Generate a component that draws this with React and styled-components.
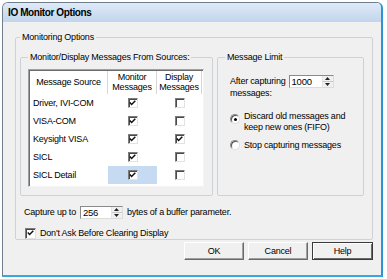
import React from 'react'
import styled, { createGlobalStyle } from 'styled-components'

const GlobalStyle = createGlobalStyle`
  *, *::before, *::after { box-sizing: border-box; }
  body {
    margin: 0;
    background: #fff;
    font-family: "Liberation Sans", Arial, sans-serif;
    font-size: 9px;
    letter-spacing: -0.2px;
    color: #000;
  }
`

const Window = styled.div`
  margin: 2px 0 0 2px;
  width: 381px;
  height: 275px;
  border: 1px solid #6f7f8f;
  border-right: 2px solid #2a94d6;
  border-bottom: 2px solid #35a8e0;
  border-radius: 6px 6px 0 0;
  display: flex;
  flex-direction: column;
  overflow: hidden;
`

const TitleBar = styled.div`
  height: 19px;
  flex: none;
  display: flex;
  align-items: center;
  padding-left: 5px;
  background: linear-gradient(#dfeaf7, #c1d5ec);
  font-size: 10px;
  font-weight: bold;
  letter-spacing: -0.4px;
`

const Content = styled.div`
  flex: 1;
  background: #f0f0f0;
  padding: 10px 8px 0 12px;
  display: flex;
  flex-direction: column;
`

const Group = styled.fieldset`
  margin: 0;
  min-width: 0;
  border: 1px solid #cdd2d7;
  border-radius: 2px;
  padding: ${p => p.$pad};
  width: ${p => p.$w || 'auto'};
  display: flex;
  flex-direction: column;
`

const Legend = styled.legend`
  padding: 0 2px;
  margin-left: ${p => p.$lx || 0}px;
  line-height: 11px;
  font-size: 9px;
`

const GroupRow = styled.div`
  display: flex;
  gap: 4px;
  height: 144px;
`

const Table = styled.div`
  height: 118px;
  background: #fff;
  border: 1px solid;
  border-color: #a0a0a0 #f4f4f4 #f4f4f4 #a0a0a0;
  box-shadow: inset 1px 1px #6c6c6c;
  padding: 1px 0 0 1px;
  display: grid;
  grid-template-columns: 78px 49px 45px;
  grid-template-rows: 23px repeat(5, 18px);
  align-content: start;
`

const HeadCell = styled.div`
  display: flex;
  align-items: center;
  justify-content: center;
  text-align: center;
  line-height: 9.5px;
  border-right: 1px solid #d6d6d6;
`

const Cell = styled.div`
  display: flex;
  align-items: center;
  justify-content: ${p => (p.$center ? 'center' : 'flex-start')};
  padding-left: ${p => (p.$center ? 0 : 3)}px;
  background: ${p => (p.$hl ? '#c6daf1' : 'transparent')};
`

const CheckBox = styled.span`
  width: ${p => p.$size}px;
  height: ${p => p.$size}px;
  flex: none;
  background: #fff;
  border: 1px solid;
  border-color: #7c7c7c #e2e2e2 #e2e2e2 #7c7c7c;
  box-shadow: inset 1px 1px #4a4a4a;
  display: flex;
  align-items: center;
  justify-content: center;
  svg { display: block; }
`

const Check = ({ on, size = 10 }) => (
  <CheckBox $size={size}>
    {on && (
      <svg width="7" height="6" viewBox="0 0 7 6">
        <path d="M0.8 2.6 L2.6 4.5 L6.3 0.8" fill="none" stroke="#111" strokeWidth="1.5" />
      </svg>
    )}
  </CheckBox>
)

const SpinBox = styled.div`
  width: ${p => p.$w}px;
  height: 13px;
  flex: none;
  display: flex;
  background: #fff;
  border: 1px solid;
  border-color: #8a8a8a #dcdcdc #dcdcdc #8a8a8a;
`

const SpinValue = styled.div`
  flex: 1;
  padding-left: 2px;
  font-size: 9.5px;
  line-height: 11px;
`

const SpinArrows = styled.div`
  width: 11px;
  display: flex;
  flex-direction: column;
  background: #f0f0f0;
  border-left: 1px solid #e4e4e4;
`

const SpinHalf = styled.div`
  flex: 1;
  display: flex;
  align-items: center;
  justify-content: center;
  border-bottom: ${p => (p.$top ? '1px solid #c8c8c8' : 'none')};
`

const Spinner = ({ value, width }) => (
  <SpinBox $w={width}>
    <SpinValue>{value}</SpinValue>
    <SpinArrows>
      <SpinHalf $top>
        <svg width="5" height="3" viewBox="0 0 5 3"><path d="M0 3 L2.5 0 L5 3 Z" fill="#222" /></svg>
      </SpinHalf>
      <SpinHalf>
        <svg width="5" height="3" viewBox="0 0 5 3"><path d="M0 0 L5 0 L2.5 3 Z" fill="#222" /></svg>
      </SpinHalf>
    </SpinArrows>
  </SpinBox>
)

const Line = styled.div`
  display: flex;
  align-items: center;
  gap: ${p => p.$gap || 0}px;
  height: ${p => p.$h}px;
  margin-top: ${p => p.$mt || 0}px;
  margin-left: ${p => p.$ml || 0}px;
  line-height: 11px;
`

const RadioRow = styled.div`
  display: flex;
  align-items: flex-start;
  gap: 4px;
  margin-top: ${p => p.$mt}px;
  line-height: 11px;
`

const Radio = styled.span`
  width: 10px;
  height: 10px;
  flex: none;
  margin-top: ${p => p.$mt || 0}px;
  border-radius: 50%;
  background: #fff;
  border: 1px solid #8a8a8a;
  border-right-color: #dedede;
  border-bottom-color: #dedede;
  box-shadow: inset 1px 1px #555;
  display: flex;
  align-items: center;
  justify-content: center;
  &::after {
    content: '';
    width: 3px;
    height: 3px;
    border-radius: 50%;
    background: ${p => (p.$on ? '#000' : 'transparent')};
  }
`

const Buttons = styled.div`
  display: flex;
  justify-content: flex-end;
  gap: 4px;
  margin-top: 2px;
`

const Button = styled.div`
  width: ${p => (p.$default ? 61 : 60)}px;
  height: 18px;
  display: flex;
  align-items: center;
  justify-content: center;
  background: #f0f0f0;
  border: 1px solid;
  border-color: ${p => (p.$default ? '#3a3a3a' : '#fff #6a6a6a #6a6a6a #fff')};
  box-shadow: ${p =>
    p.$default
      ? 'inset 1px 1px #fff, inset -1px -1px #6a6a6a'
      : 'inset -1px -1px #a0a0a0'};
`

const sources = [
  ['Driver, IVI-COM', true, false],
  ['VISA-COM', true, false],
  ['Keysight VISA', true, true],
  ['SICL', true, false],
  ['SICL Detail', true, false],
]

export default function App() {
  return (
    <>
      <GlobalStyle />
      <Window>
        <TitleBar>IO Monitor Options</TitleBar>
        <Content>
          <Group $pad="9px 8px 0 4px">
            <Legend>Monitoring Options</Legend>
            <GroupRow>
              <Group $w="193px" $pad="6px 8px 0 7px">
                <Legend>Monitor/Display Messages From Sources:</Legend>
                <Table>
                  <HeadCell>Message Source</HeadCell>
                  <HeadCell>Monitor<br />Messages</HeadCell>
                  <HeadCell>Display<br />Messages</HeadCell>
                  {sources.map(([name, mon, disp], i) => (
                    <React.Fragment key={name}>
                      <Cell>{name}</Cell>
                      <Cell $center $hl={i === sources.length - 1}><Check on={mon} /></Cell>
                      <Cell $center><Check on={disp} /></Cell>
                    </React.Fragment>
                  ))}
                </Table>
              </Group>
              <Group $w="147px" $pad="12px 8px 0 12px">
                <Legend $lx={-5}>Message Limit</Legend>
                <Line $h={13} $gap={3}>
                  After capturing <Spinner value="1000" width={45} />
                </Line>
                <Line $h={11}>messages:</Line>
                <RadioRow $mt={12}>
                  <Radio $on $mt={3} />
                  <span>Discard old messages and<br />keep new ones (FIFO)</span>
                </RadioRow>
                <RadioRow $mt={7}>
                  <Radio />
                  <span>Stop capturing messages</span>
                </RadioRow>
              </Group>
            </GroupRow>
            <Line $h={14} $mt={9} $ml={4} $gap={4}>
              Capture up to <Spinner value="256" width={43} /> bytes of a buffer parameter.
            </Line>
            <Line $h={12} $mt={8} $ml={5} $gap={4}>
              <Check on size={11} /> Don't Ask Before Clearing Display
            </Line>
          </Group>
          <Buttons>
            <Button>OK</Button>
            <Button>Cancel</Button>
            <Button $default>Help</Button>
          </Buttons>
        </Content>
      </Window>
    </>
  )
}
